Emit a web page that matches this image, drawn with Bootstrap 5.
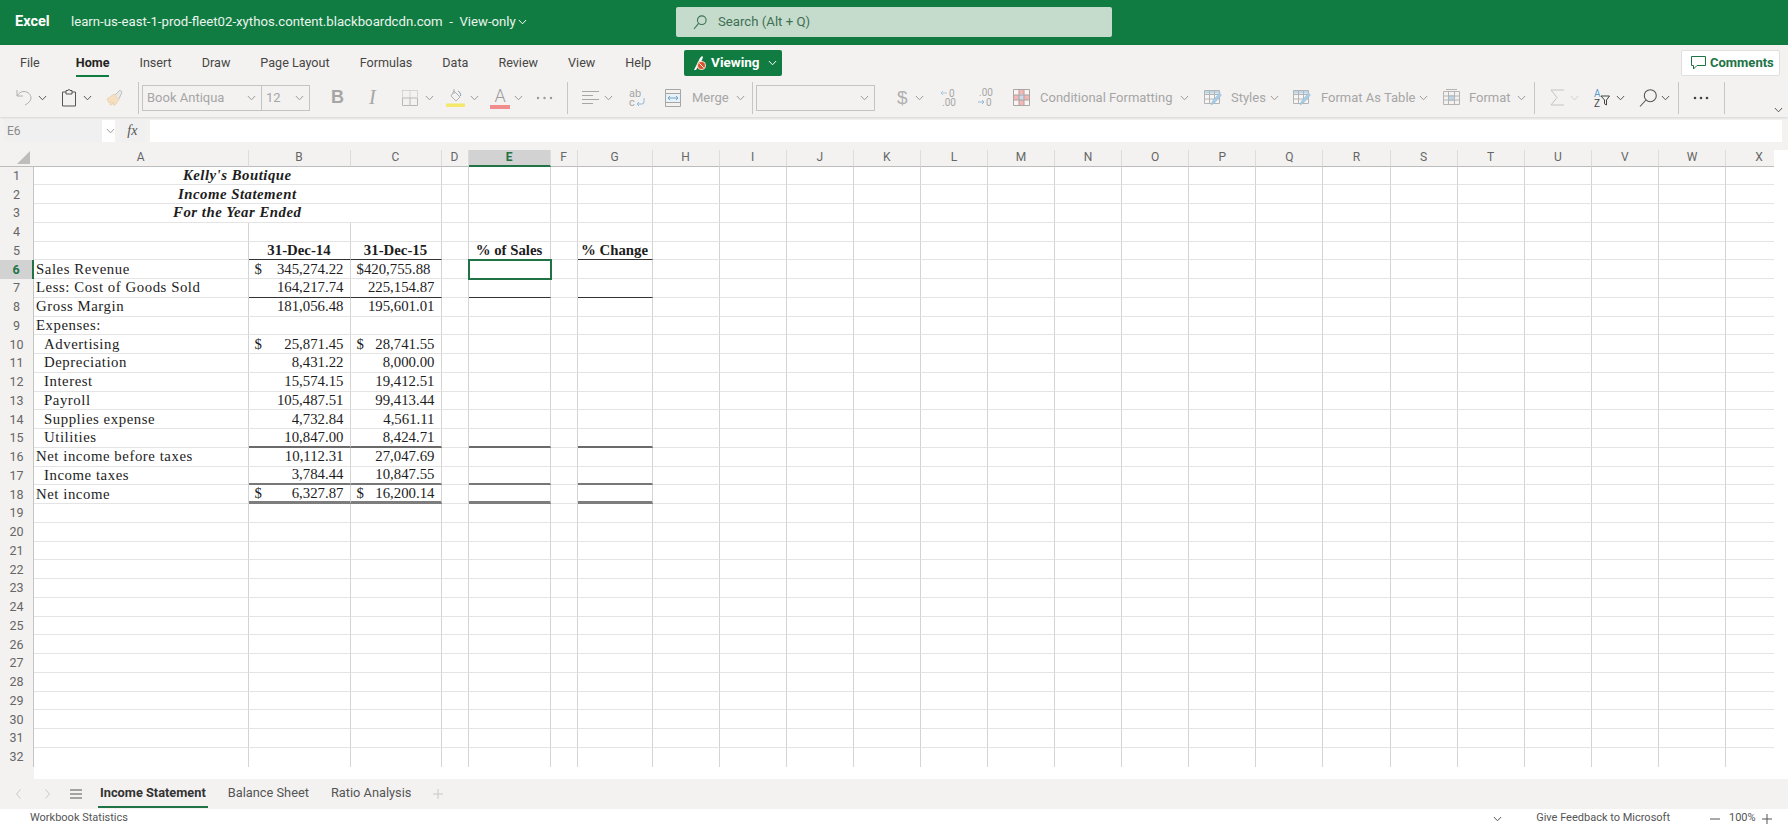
<!DOCTYPE html>
<html lang="en">
<head>
<meta charset="UTF-8">
<title>Excel - Income Statement</title>
<link href="https://cdn.jsdelivr.net/npm/bootstrap@5.3.0/dist/css/bootstrap.min.css" rel="stylesheet">
<style>
html,body{height:100%;overflow:hidden;background:#fff}
body{font-family:Roboto,"Noto Sans",sans-serif;font-size:13px;color:#444}
svg{display:block;flex:none}
.chev{width:9px;height:6px;color:#999}
.chev.dark{color:#555}
.chev.lite{color:#cfcfcf}

/* title bar */
.topbar{height:44.5px;background:#107c41;color:#fff;padding-left:15px}
.appname{font-weight:700;font-size:14.500px;width:56px}
.docname{font-size:13.200px;color:#eaf4ee;white-space:nowrap;width:447px}
.searchbox{margin-left:149px;width:436px;height:30px;background:#c5dccd;border-radius:2px;padding-left:17px;color:#3f6f52}
.searchbox span{margin-left:11px;font-size:13.200px}

/* ribbon */
.ribbon{height:72px;background:#f3f2f1;box-shadow:0 1px 2px rgba(0,0,0,.12);position:relative}
.tabrow{height:36px;padding-left:20px;position:relative}
.tabrow .nav{gap:30px}
.tabrow .nav-link{padding:0;color:#484644;font-size:12.600px;line-height:30px;height:29px;white-space:nowrap}
.tabrow .nav-link.first{margin-right:6px}
.tabrow .nav-link.active{color:#252423;font-weight:700;box-shadow:inset 0 -2px #107c41;height:29px}
.btn-viewing{margin-left:33px;width:98px;height:26px;padding:0 0 0 9px;background:#107c41;border:0;border-radius:2px;color:#fff;font-weight:700;font-size:13.500px}
.btn-comments{margin-left:auto;margin-right:8px;width:99px;height:26px;padding:0 0 0 9px;background:#fff;border:1px solid #e1dfdd;border-radius:2px;color:#217346;font-weight:700;font-size:13px}
.toolrow{height:36px;padding:0 5px 2px 16px;color:#a6a6a6}
.vsep{width:1px;height:32px;background:#c8c6c4;flex:none}
.fontbox{height:26px;border:1px solid #c4c4c4;font-size:13px;color:#a6a6a6;flex:none}
.fontbox>div{padding:0 5px 0 4px;border-right:1px solid #c4c4c4;height:100%}
.fontbox>div:last-child{border-right:0}
.fn{width:119px}
.fs{width:47px}
.numfmt{width:119px;justify-content:flex-end;padding-right:5px}
.lbl{font-size:13px;color:#a6a6a6;white-space:nowrap;flex:none}
.l-merge{width:37px}.l-cond{width:133px}.l-styles{width:32px}.l-fat{width:91px}.l-fmt{width:41px}
.glyph-b{font:700 18px "Liberation Sans",sans-serif;width:11px;color:#a6a6a6}
.glyph-i{font:italic 400 20px "Liberation Serif",serif;width:9px;color:#a6a6a6}
.glyph-d{font:400 19px "Liberation Sans",sans-serif;width:8px;color:#b0b0b0}
.glyph-a{font:300 18px/18px Roboto,sans-serif;width:20px;text-align:center;color:#9c9c9c;border-bottom:4px solid #f08c8c}
.sp3{margin-left:3px}.sp4{margin-left:4px}.sp5{margin-left:5px}.sp6{margin-left:6px}.sp7{margin-left:7px}.sp8{margin-left:8px}
.sp9{margin-left:9px}.sp10{margin-left:10px}.sp11{margin-left:11px}.sp12{margin-left:12px}.sp13{margin-left:13px}.sp14{margin-left:14px}
.sp15{margin-left:15px}.sp16{margin-left:16px}.sp20{margin-left:20px}.sp21{margin-left:21px}.sp22{margin-left:22px}.sp24{margin-left:24px}.sp27{margin-left:27px}.sp34{margin-left:34px}.sp40{margin-left:40px}

/* formula bar */
.fxrow{height:33px;background:#f3f2f1;padding:3px 6px 8px 4px}
.namebox{width:112px;height:22px;background:#fff;font-size:12px;color:#8a8a8a}
.namebox span{width:98px;height:100%;background:#f0f0f0;padding-left:3px;line-height:22px}
.namebox svg{margin-left:4px}
.fxbtn{width:27px;height:22px;margin:0 5px;font:italic 14px "Liberation Serif",serif;color:#555;background:#f0f0f0}
.fxrow .form-control{height:22px;min-height:0;padding:0;border:0;border-radius:0;background:#fff}

/* sheet */
.sheetarea{height:629px;background:linear-gradient(90deg,#f3f2f1 34px,#fff 34px)}
.sheetclip{width:1774px;overflow:hidden}
.sheet{border-collapse:separate;border-spacing:0;table-layout:fixed;width:1792px}
.sheet th,.sheet td{padding:0;box-sizing:border-box;white-space:nowrap;overflow:visible}
.sheet thead th{height:17px;background:#f3f2f1;border-right:1px solid #dcdcdc;border-bottom:1px solid #bdbdbd;text-align:center;font-weight:400;font-size:12px;color:#666;line-height:15px}
.sheet thead th.corner{border-right:0;position:relative}
.corner svg{margin-left:17px}
.sheet thead th.sel{background:#d2d2d2;color:#217346;font-weight:700;border-bottom:2px solid #217346}
.sheet tbody th{height:18.750px;background:#f3f2f1;border-right:1px solid #c4c4c4;text-align:center;font-weight:400;font-size:12.500px;color:#666;line-height:14px}
.sheet tbody th.sel{background:#d2d2d2;color:#217346;font-weight:700;border-right:2px solid #217346}
.sheet td{height:18.750px;border-right:1px solid #d4d4d4;border-bottom:1px solid #e4e4e4;font:14.800px/15px "Liberation Serif",serif;color:#1d1d1d}
.sheet tr:last-child td{border-bottom:0}
.sheet td.ttl{font-weight:700;font-style:italic;text-align:center;letter-spacing:.5px}
.sheet td.txt{padding-left:2px;letter-spacing:.55px}
.sheet td.ind{padding-left:10px;letter-spacing:.55px}
.sheet td.hd{font-weight:700;text-align:center}
.sheet td.num{text-align:right;padding-right:6px}
.sheet td.pad10{padding-right:10px}
.cur{float:left;padding-left:6px}
.sheet td.b1{border-bottom:1px solid #333}
.sheet td.b15{border-bottom:2px solid #6a6a6a}
.sheet td.b17{border-bottom:2px solid #777}
.sheet td.b18{border-bottom:3px solid #7d7d7d}
.sheet td.active{outline:2px solid #217346;outline-offset:-1px}

/* bottom bars */
.sheettabs{height:30px;background:#f3f2f1;color:#bdbdbd}
.sheettabs .nav{margin-left:16px;gap:18px}
.sheettabs .nav-link{padding:0 2px;font-size:12.800px;line-height:27px;height:29px;color:#555;white-space:nowrap}
.sheettabs .nav-link.active{color:#333;font-weight:700;box-shadow:inset 0 -2px #217346}
.statusbar{height:20px;font-size:11px;color:#555;padding-left:30px}
.zoomtxt{width:26px;text-align:center}
</style>
</head>
<body>
<svg width="0" height="0" class="position-absolute">
  <symbol id="chevron" viewBox="0 0 10 6"><path d="M1 .8 5 5l4-4.200" fill="none" stroke="currentColor" stroke-width="1.100"/></symbol>
  <symbol id="tablepen" viewBox="0 0 18 17"><path d="M.5 1.500h15v13H.5z" fill="#f6f6f6"/><path d="M.5 1.500h15v3H.5z" fill="#bcd7ea"/><path d="M.5 1.500h15v13H.5zM5.500 1.500v13M10.500 1.500v13M.5 5.500h15M.5 10h15" fill="none" stroke="#b4b4b4"/><path d="m7 16 1.500-4 7-8 2 2-7 8z" fill="#a9cde6" stroke="#8fb9d8" stroke-width=".5"/></symbol>
</svg>

<div class="topbar d-flex align-items-center">
  <div class="appname">Excel</div>
  <div class="docname">learn-us-east-1-prod-fleet02-xythos.content.blackboardcdn.com&nbsp; - &nbsp;View-only</div>
  <svg class="chev text-white" viewBox="0 0 10 6"><use href="#chevron"/></svg>
  <div class="searchbox d-flex align-items-center">
    <svg width="14" height="15" viewBox="0 0 14 15" fill="none" stroke="#3f6f52" stroke-width="1.100"><circle cx="8.800" cy="5.200" r="4.300"/><path d="M5.600 8.400 1 14"/></svg>
    <span>Search (Alt + Q)</span>
  </div>
</div>

<div class="ribbon">
  <div class="tabrow d-flex align-items-center">
    <ul class="nav">
      <li class="nav-item"><a class="nav-link first" href="#">File</a></li>
      <li class="nav-item"><a class="nav-link active" href="#">Home</a></li>
      <li class="nav-item"><a class="nav-link" href="#">Insert</a></li>
      <li class="nav-item"><a class="nav-link" href="#">Draw</a></li>
      <li class="nav-item"><a class="nav-link" href="#">Page Layout</a></li>
      <li class="nav-item"><a class="nav-link" href="#">Formulas</a></li>
      <li class="nav-item"><a class="nav-link" href="#">Data</a></li>
      <li class="nav-item"><a class="nav-link" href="#">Review</a></li>
      <li class="nav-item"><a class="nav-link" href="#">View</a></li>
      <li class="nav-item"><a class="nav-link" href="#">Help</a></li>
    </ul>
    <button class="btn btn-viewing d-flex align-items-center gap-1" type="button">
      <svg width="14" height="16" viewBox="0 0 14 16"><path d="M1 15 7 3l2-2 1 1-1 3L3 15z" fill="#fff"/><circle cx="8.500" cy="10.500" r="4.500" fill="#f3d6c8"/><circle cx="8.500" cy="10.500" r="3.400" fill="#d9532c"/><path d="m6.300 8.300 4.400 4.400" stroke="#fff"/></svg>
      Viewing
      <svg class="chev ms-1 text-white" viewBox="0 0 10 6"><use href="#chevron"/></svg>
    </button>
    <button class="btn btn-comments d-flex align-items-center gap-1" type="button">
      <svg width="15" height="14" viewBox="0 0 15 14" fill="none" stroke="#217346"><path d="M.5.500h14v9H6L2.500 13V9.500h-2z"/></svg>
      Comments
    </button>
  </div>

  <div class="toolrow d-flex align-items-center">
    <svg width="16" height="17" viewBox="0 0 16 17" fill="none" stroke="#b0b0b0"><path d="M1 1v6h6"/><path d="M1 7C3 4 5 2.500 8 2.500c4 0 7 3 7 6.500 0 3-2.500 5-6 7"/></svg>
    <svg class="chev dark sp6" viewBox="0 0 10 6"><use href="#chevron"/></svg>
    <svg class="sp15" width="14" height="18" viewBox="0 0 14 18" fill="none" stroke="#555"><path d="M4 3H.5v14h13V3H10"/><path d="M4 5V1.500h2a1 1 0 0 1 2 0h2V5z"/></svg>
    <svg class="chev dark sp7" viewBox="0 0 10 6"><use href="#chevron"/></svg>
    <svg class="sp14" width="17" height="17" viewBox="0 0 17 17"><path d="M1 10 8 5l5 6-4 5H7l1-3-3 3H4l1-3-2 1z" fill="#f5dfc0" stroke="#e6c79a" stroke-width=".6"/><path d="M9 6 14 1l2 2-3 7" fill="#e8e8e8" stroke="#b4b4b4" stroke-width=".8"/></svg>
    <div class="vsep sp15"></div>
    <div class="fontbox d-flex sp3">
      <div class="fn d-flex align-items-center justify-content-between">Book Antiqua<svg class="chev" viewBox="0 0 10 6"><use href="#chevron"/></svg></div>
      <div class="fs d-flex align-items-center justify-content-between">12<svg class="chev" viewBox="0 0 10 6"><use href="#chevron"/></svg></div>
    </div>
    <div class="glyph-b sp21">B</div>
    <div class="glyph-i sp27">I</div>
    <svg class="sp24" width="16" height="16" viewBox="0 0 16 16" fill="none" stroke="#b8b8b8"><path d="M.5.500h15v7M.5.500v7M8 .5v7" stroke-dasharray="1 1"/><path d="M.5 8h15M.5 8v7.500h15V8M8 8v7.500"/></svg>
    <svg class="chev sp7" viewBox="0 0 10 6"><use href="#chevron"/></svg>
    <svg class="sp12" width="19" height="20" viewBox="0 0 19 20"><path d="m8 3 6 6-4 4-5-5z" fill="none" stroke="#b0b0b0"/><path d="M8 1v5" stroke="#b0b0b0"/><path d="M12 3c2 1 3 3 2.500 5" fill="none" stroke="#7d99b5"/><rect y="15.500" width="19" height="3.500" fill="#f5e96b"/></svg>
    <svg class="chev sp5" viewBox="0 0 10 6"><use href="#chevron"/></svg>
    <div class="glyph-a sp11">A</div>
    <svg class="chev sp4" viewBox="0 0 10 6"><use href="#chevron"/></svg>
    <svg class="sp13" width="17" height="4" viewBox="0 0 17 4" fill="#999"><circle cx="2" cy="2" r="1.200"/><circle cx="8.500" cy="2" r="1.200"/><circle cx="15" cy="2" r="1.200"/></svg>
    <div class="vsep sp14"></div>
    <svg class="sp14" width="17" height="15" viewBox="0 0 17 15" stroke="#a6a6a6"><path d="M0 1.500h17M0 5.500h11M0 9.500h17M0 13.500h11"/></svg>
    <svg class="chev sp5" viewBox="0 0 10 6"><use href="#chevron"/></svg>
    <svg class="sp16" width="16" height="20" viewBox="0 0 16 20" font-family="Roboto" font-size="11" fill="#a6a6a6"><text x="0" y="9">ab</text><text x="0" y="18">c</text><path d="M15 10v4a2 2 0 0 1-2 2H8m2-2-2 2 2 2" fill="none" stroke="#8fb9d8"/></svg>
    <svg class="sp20" width="16" height="18" viewBox="0 0 16 18" fill="none" stroke="#a6a6a6"><path d="M.5 5h15v8H.5z" fill="#e8f1f7" stroke="none"/><path d="M.5.500h15v17H.5zM.5 4.500h15M.5 13.500h15"/><path d="M3 9h10M5 7 3 9l2 2M11 7l2 2-2 2" stroke="#6fa5c9"/></svg>
    <div class="lbl l-merge sp11">Merge</div>
    <svg class="chev sp7" viewBox="0 0 10 6"><use href="#chevron"/></svg>
    <div class="vsep sp7"></div>
    <div class="fontbox d-flex align-items-center numfmt sp3"><svg class="chev" viewBox="0 0 10 6"><use href="#chevron"/></svg></div>
    <div class="glyph-d sp22">$</div>
    <svg class="chev sp10" viewBox="0 0 10 6"><use href="#chevron"/></svg>
    <svg class="sp16" width="16" height="20" viewBox="0 0 16 20" font-family="Roboto" font-size="10" fill="#a6a6a6"><path d="M7 5H1m2-2L1 5l2 2" fill="none" stroke="#a6cbe3"/><text x="9" y="9">0</text><text x="2" y="18">.00</text></svg>
    <svg class="sp21" width="16" height="20" viewBox="0 0 16 20" font-family="Roboto" font-size="10" fill="#a6a6a6"><text x="2" y="8">.00</text><path d="M1 14h6m-2-2 2 2-2 2" fill="none" stroke="#8fb9d8"/><text x="9" y="18">0</text></svg>
    <svg class="sp20" width="17" height="17" viewBox="0 0 17 17"><path d="M.5.500h16v16H.5z" fill="#fdf3f3"/><path d="M6 .5h5v5H6zM6 11h5v5.500H6zM.5 6H6v5H.5zM11 6h5.500v5H11z" fill="#f6b4b4"/><path d="M6 6h5v5H6z" fill="#c9d9ea"/><path d="M.5.500h16v16H.5zM6 .5v16M11 .5v16M.5 6h16M.5 11h16" fill="none" stroke="#a6a6a6"/></svg>
    <div class="lbl l-cond sp10">Conditional Formatting</div>
    <svg class="chev sp7" viewBox="0 0 10 6"><use href="#chevron"/></svg>
    <svg class="sp15" width="18" height="17" viewBox="0 0 18 17"><use href="#tablepen"/></svg>
    <div class="lbl l-styles sp9">Styles</div>
    <svg class="chev sp7" viewBox="0 0 10 6"><use href="#chevron"/></svg>
    <svg class="sp14" width="18" height="17" viewBox="0 0 18 17"><use href="#tablepen"/></svg>
    <div class="lbl l-fat sp10">Format As Table</div>
    <svg class="chev sp7" viewBox="0 0 10 6"><use href="#chevron"/></svg>
    <svg class="sp15" width="17" height="18" viewBox="0 0 17 18"><path d="M5 6h7v6H5z" fill="#bcd7ea"/><path d="M.5 2.500h16v13H.5zM5.500 2.500v13M11.500 2.500v13M.5 7h16M.5 11h16M3 .5h11" fill="none" stroke="#b4b4b4"/></svg>
    <div class="lbl l-fmt sp9">Format</div>
    <svg class="chev sp7" viewBox="0 0 10 6"><use href="#chevron"/></svg>
    <div class="vsep sp8"></div>
    <svg class="sp15" width="14" height="17" viewBox="0 0 14 17" fill="none" stroke="#c4c4c4"><path d="M14 1H1l6 7.500L1 16h13"/></svg>
    <svg class="chev lite sp6" viewBox="0 0 10 6"><use href="#chevron"/></svg>
    <svg class="sp15" width="16" height="20" viewBox="0 0 16 20" font-family="Roboto" font-size="10"><text x="0" y="9" fill="#5b9bd0">A</text><text x="0" y="19" fill="#444">Z</text><path d="M7 8h8.500l-3 4v5l-2-1.200V12z" fill="none" stroke="#444"/></svg>
    <svg class="chev dark sp6" viewBox="0 0 10 6"><use href="#chevron"/></svg>
    <svg class="sp14" width="18" height="18" viewBox="0 0 18 18" fill="none" stroke="#555" stroke-width="1.100"><circle cx="11.300" cy="6.700" r="6"/><path d="M7 11 1 17.500"/></svg>
    <svg class="chev dark sp4" viewBox="0 0 10 6"><use href="#chevron"/></svg>
    <div class="vsep sp8"></div>
    <svg class="sp14" width="16" height="4" viewBox="0 0 16 4" fill="#444"><circle cx="2" cy="2" r="1.300"/><circle cx="8" cy="2" r="1.300"/><circle cx="14" cy="2" r="1.300"/></svg>
    <div class="vsep sp15"></div>
    <svg class="chev dark ms-auto mt-4" viewBox="0 0 10 6"><use href="#chevron"/></svg>
  </div>
</div>

<div class="fxrow d-flex">
  <div class="namebox d-flex align-items-center">
    <span>E6</span>
    <svg class="chev" viewBox="0 0 10 6"><use href="#chevron"/></svg>
  </div>
  <div class="fxbtn d-flex align-items-center justify-content-center">fx</div>
  <input class="form-control flex-grow-1" type="text" aria-label="Formula">
</div>

<div class="sheetarea">
  <div class="sheetclip">
    <table class="sheet" id="sheet">
      <colgroup id="cols"></colgroup>
      <thead><tr id="headrow"></tr></thead>
      <tbody id="rows">
        <tr><th>1</th><td colspan="3" class="ttl">Kelly's Boutique</td><td></td><td></td><td></td><td></td></tr>
        <tr><th>2</th><td colspan="3" class="ttl">Income Statement</td><td></td><td></td><td></td><td></td></tr>
        <tr><th>3</th><td colspan="3" class="ttl">For the Year Ended</td><td></td><td></td><td></td><td></td></tr>
        <tr><th>4</th><td></td><td></td><td></td><td></td><td></td><td></td><td></td></tr>
        <tr><th>5</th><td></td><td class="hd b1">31-Dec-14</td><td class="hd b1">31-Dec-15</td><td></td><td class="hd">% of Sales</td><td></td><td class="hd b1">% Change</td></tr>
        <tr><th class="sel">6</th><td class="txt">Sales Revenue</td><td class="num"><span class="cur">$</span>345,274.22</td><td class="num pad10">$420,755.88</td><td></td><td class="active"></td><td></td><td></td></tr>
        <tr><th>7</th><td class="txt">Less: Cost of Goods Sold</td><td class="num b1">164,217.74</td><td class="num b1">225,154.87</td><td></td><td class="b1"></td><td></td><td class="b1"></td></tr>
        <tr><th>8</th><td class="txt">Gross Margin</td><td class="num">181,056.48</td><td class="num">195,601.01</td><td></td><td></td><td></td><td></td></tr>
        <tr><th>9</th><td class="txt">Expenses:</td><td></td><td></td><td></td><td></td><td></td><td></td></tr>
        <tr><th>10</th><td class="ind">Advertising</td><td class="num"><span class="cur">$</span>25,871.45</td><td class="num"><span class="cur">$</span>28,741.55</td><td></td><td></td><td></td><td></td></tr>
        <tr><th>11</th><td class="ind">Depreciation</td><td class="num">8,431.22</td><td class="num">8,000.00</td><td></td><td></td><td></td><td></td></tr>
        <tr><th>12</th><td class="ind">Interest</td><td class="num">15,574.15</td><td class="num">19,412.51</td><td></td><td></td><td></td><td></td></tr>
        <tr><th>13</th><td class="ind">Payroll</td><td class="num">105,487.51</td><td class="num">99,413.44</td><td></td><td></td><td></td><td></td></tr>
        <tr><th>14</th><td class="ind">Supplies expense</td><td class="num">4,732.84</td><td class="num">4,561.11</td><td></td><td></td><td></td><td></td></tr>
        <tr><th>15</th><td class="ind">Utilities</td><td class="num b15">10,847.00</td><td class="num b15">8,424.71</td><td></td><td class="b15"></td><td></td><td class="b15"></td></tr>
        <tr><th>16</th><td class="txt">Net income before taxes</td><td class="num">10,112.31</td><td class="num">27,047.69</td><td></td><td></td><td></td><td></td></tr>
        <tr><th>17</th><td class="ind">Income taxes</td><td class="num b17">3,784.44</td><td class="num b17">10,847.55</td><td></td><td class="b17"></td><td></td><td class="b17"></td></tr>
        <tr><th>18</th><td class="txt">Net income</td><td class="num b18"><span class="cur">$</span>6,327.87</td><td class="num b18"><span class="cur">$</span>16,200.14</td><td></td><td class="b18"></td><td></td><td class="b18"></td></tr>
      </tbody>
    </table>
  </div>
</div>

<div class="sheettabs d-flex align-items-center">
  <svg class="ms-3" width="5" height="10" viewBox="0 0 5 10" fill="none" stroke="#c8c8c8"><path d="M4.500.5 .5 5l4 4.500"/></svg>
  <svg class="ms-4" width="5" height="10" viewBox="0 0 5 10" fill="none" stroke="#c8c8c8"><path d="M.5.500 4.500 5l-4 4.500"/></svg>
  <svg class="sp20" width="12" height="10" viewBox="0 0 12 10" stroke="#555"><path d="M0 1h12M0 5h12M0 9h12"/></svg>
  <ul class="nav">
    <li class="nav-item"><a class="nav-link active" href="#">Income Statement</a></li>
    <li class="nav-item"><a class="nav-link" href="#">Balance Sheet</a></li>
    <li class="nav-item"><a class="nav-link" href="#">Ratio Analysis</a></li>
  </ul>
  <svg class="sp20" width="10" height="10" viewBox="0 0 10 10" stroke="#c8c8c8"><path d="M5 0v10M0 5h10"/></svg>
</div>

<div class="statusbar d-flex align-items-center">
  <span>Workbook Statistics</span>
  <svg class="chev dark ms-auto" viewBox="0 0 10 6"><use href="#chevron"/></svg>
  <span class="sp34">Give Feedback to Microsoft</span>
  <svg class="sp40" width="10" height="2" viewBox="0 0 10 2" stroke="#555"><path d="M0 1h10"/></svg>
  <span class="zoomtxt sp9">100%</span>
  <svg class="sp7 me-3" width="10" height="10" viewBox="0 0 10 10" stroke="#555"><path d="M5 0v10M0 5h10"/></svg>
</div>

<script src="https://cdn.jsdelivr.net/npm/bootstrap@5.3.0/dist/js/bootstrap.bundle.min.js"></script>
<script>
  // column widths as measured, then the empty columns H..X and rows 19..32
  const widths = [34, 214.5, 102, 91, 27, 82, 27, 75];
  const letters = 'ABCDEFGHIJKLMNOPQRSTUVWX'.split('');
  const cols = document.getElementById('cols');
  const head = document.getElementById('headrow');
  const rows = document.getElementById('rows');

  const addCol = function (w) {
    const c = document.createElement('col');
    c.width = w;
    cols.appendChild(c);
  };
  widths.forEach(addCol);
  for (let i = 7; i < letters.length; i++) addCol(67.1);

  const corner = document.createElement('th');
  corner.className = 'corner';
  corner.innerHTML = '<svg width="13" height="13" viewBox="0 0 13 13"><path d="M13 0v13H0z" fill="#bdbdbd"/></svg>';
  head.appendChild(corner);
  letters.forEach(function (l) {
    const th = document.createElement('th');
    th.textContent = l;
    if (l === 'E') th.className = 'sel';
    head.appendChild(th);
  });

  for (let r = 19; r <= 32; r++) {
    const tr = document.createElement('tr');
    const th = document.createElement('th');
    th.textContent = r;
    tr.appendChild(th);
    for (let i = 0; i < 7; i++) tr.appendChild(document.createElement('td'));
    rows.appendChild(tr);
  }
  Array.from(rows.rows).forEach(function (tr) {
    for (let i = 7; i < letters.length; i++) tr.appendChild(document.createElement('td'));
  });
</script>
</body>
</html>
